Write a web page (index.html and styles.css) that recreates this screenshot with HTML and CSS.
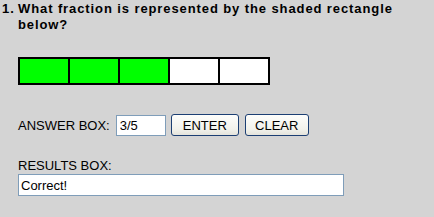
FILE: index.html
```html
<!DOCTYPE html>
<html lang="en">
<head>
    <meta charset="UTF-8">
    <title>Fraction Quiz</title>
    <link rel="stylesheet" href="styles.css">
</head>
<body>
    <div class="question">
        <span class="q-num">1.</span>
        <span class="q-text">What fraction is represented by the shaded rectangle below?</span>
    </div>

    <!-- Barra de fracción -->
    <div class="fraction-bar">
        <div class="cell shaded"></div>
        <div class="cell shaded"></div>
        <div class="cell shaded"></div>
        <div class="cell"></div>
        <div class="cell"></div>
    </div>

    <div class="answer-row">
        <label for="answer">ANSWER BOX:</label>
        <input type="text" id="answer" class="answer-input" value="3/5">
        <button class="btn btn-enter">ENTER</button>
        <button class="btn btn-clear">CLEAR</button>
    </div>

    <div class="results">
        <label for="result">RESULTS BOX:</label>
        <input type="text" id="result" class="result-input" value="Correct!">
    </div>
</body>
</html>
```

FILE: styles.css
```css
* {
    margin: 0;
    padding: 0;
    box-sizing: border-box;
}

body {
    background: #d4d4d4;
    font-family: 'Liberation Sans', Arial, sans-serif;
    font-size: 13px;
    color: #000;
    padding: 1px 0 0 18px;
}

.question {
    display: flex;
    margin-left: -16px;
    font-weight: bold;
    line-height: 16px;
    letter-spacing: 0.9px;
    width: 416px;
}

.q-num {
    width: 16px;
    flex-shrink: 0;
}

/* Barra */
.fraction-bar {
    display: flex;
    width: max-content;
    margin-top: 24px;
    border: 2px solid #000;
}

.cell {
    width: 48px;
    height: 24px;
    background: #fff;
}

.cell + .cell {
    border-left: 2px solid #000;
    width: 50px;
}

.cell.shaded {
    background: #00ff00;
}

.answer-row {
    display: flex;
    align-items: center;
    margin-top: 29px;
    height: 22px;
}

.answer-row label {
    margin-right: 6px;
}

.answer-input,
.result-input {
    font-family: 'Liberation Sans', Arial, sans-serif;
    font-size: 13px;
    border: 1px solid #7f9db9;
    background: #fff;
    color: #000;
    outline: none;
}

.answer-input {
    width: 50px;
    height: 21px;
    padding: 0 3px;
    margin-right: 5px;
}

.btn {
    font-family: 'Liberation Sans', Arial, sans-serif;
    font-size: 13px;
    height: 22px;
    padding: 0;
    margin-right: 6px;
    border: 1px solid #1c3f73;
    border-radius: 3px;
    background: linear-gradient(#fdfdfb, #f2f2ec 70%, #e4e3dc);
    color: #000;
}

.btn-enter {
    width: 68px;
}

.btn-clear {
    width: 64px;
}

.results {
    margin-top: 21px;
}

.results label {
    display: block;
    line-height: 17px;
}

.result-input {
    display: block;
    width: 326px;
    height: 22px;
    padding: 0 2px;
}
```
